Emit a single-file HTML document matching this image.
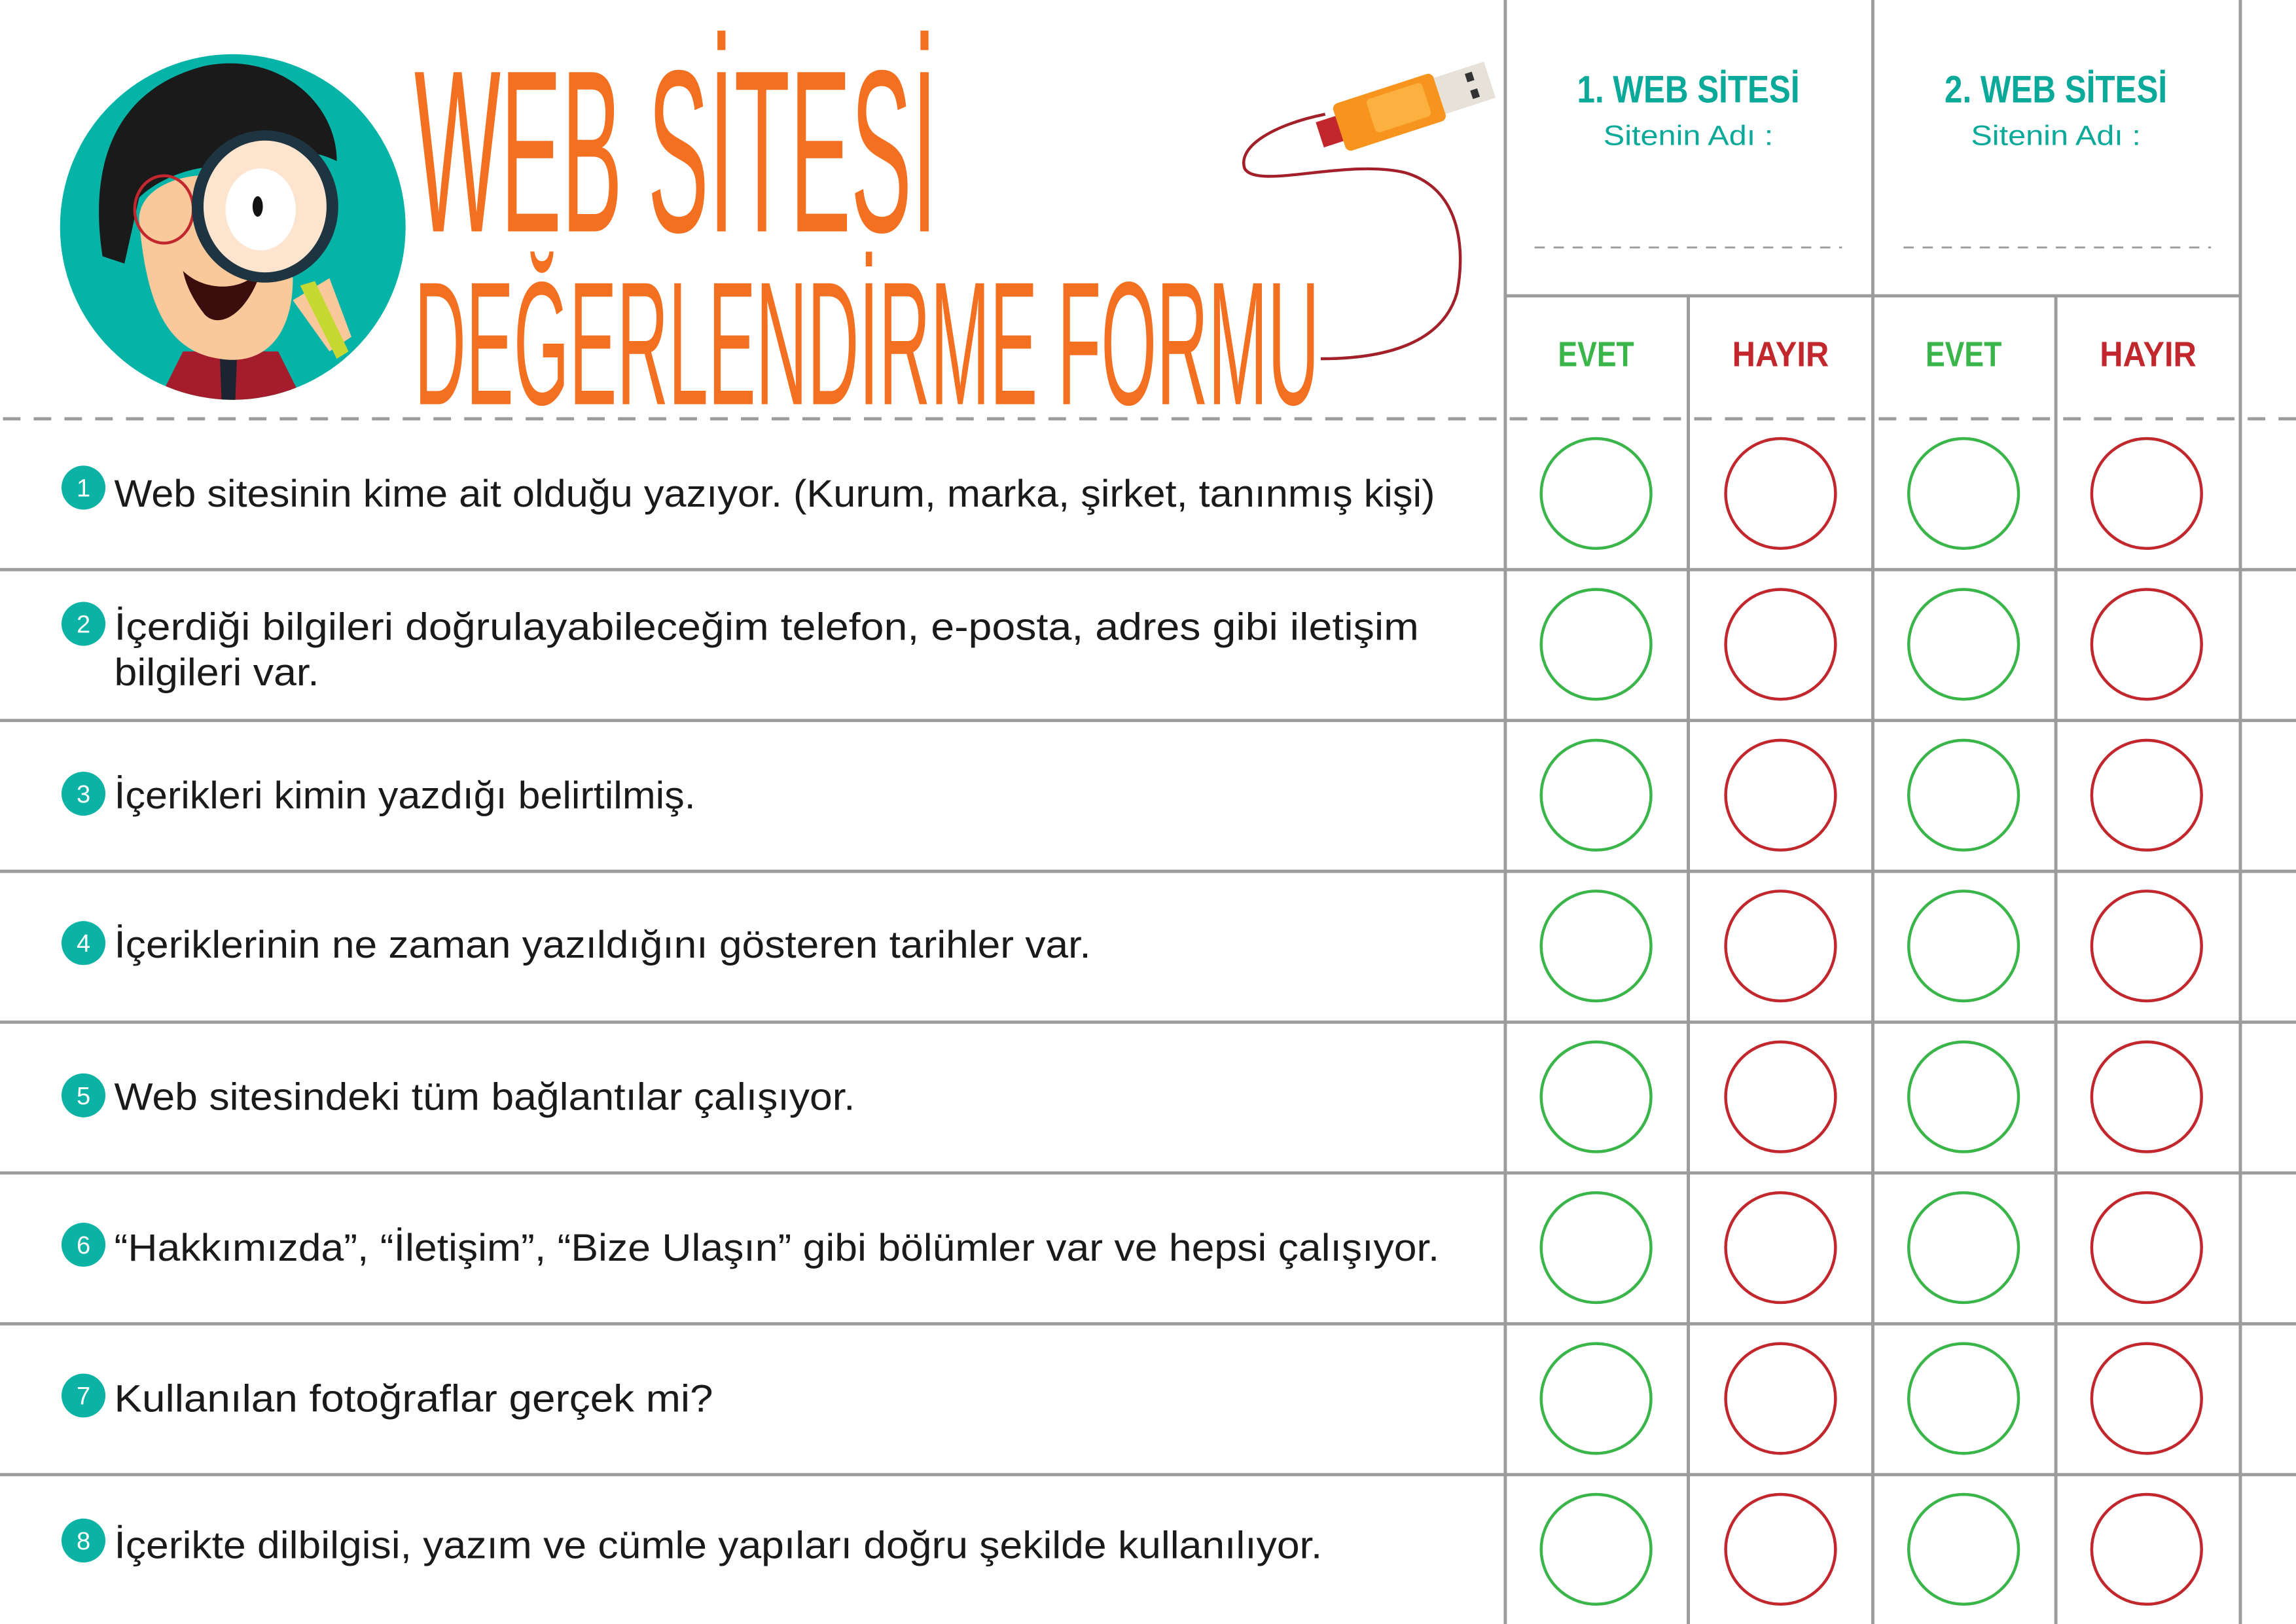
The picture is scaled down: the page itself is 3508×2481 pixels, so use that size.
<!DOCTYPE html>
<html><head><meta charset="utf-8"><style>
html,body{margin:0;padding:0;background:#fff;width:3508px;height:2481px;overflow:hidden}
svg{display:block}
.q{font-family:"Liberation Sans",sans-serif;font-size:26px;fill:#1a1a1a}
.n{font-family:"Liberation Sans",sans-serif;font-size:17px;fill:#fff;text-anchor:middle}
.t{font-family:"Liberation Sans",sans-serif;fill:#f37021}
.h{font-family:"Liberation Sans",sans-serif;font-weight:bold;fill:#0aa99a;font-size:26px}
.s{font-family:"Liberation Sans",sans-serif;fill:#0aa99a;font-size:19px}
.yn{font-family:"Liberation Sans",sans-serif;font-weight:bold;font-size:24px}
</style></head><body>
<svg width="3508" height="2481" viewBox="0 0 1568 1109" preserveAspectRatio="none" xmlns="http://www.w3.org/2000/svg">
<rect width="1568" height="1109" fill="#fff"/>
<g stroke="#9c9c9e" stroke-width="2.2" fill="none">
<line x1="1028" y1="0" x2="1028" y2="1109"/>
<line x1="1279" y1="0" x2="1279" y2="1109"/>
<line x1="1530" y1="0" x2="1530" y2="1109"/>
<line x1="1153" y1="202" x2="1153" y2="1109"/>
<line x1="1404" y1="202" x2="1404" y2="1109"/>
<line x1="1028" y1="202" x2="1530" y2="202"/>
<line x1="0" y1="389" x2="1568" y2="389"/>
<line x1="0" y1="492" x2="1568" y2="492"/>
<line x1="0" y1="595" x2="1568" y2="595"/>
<line x1="0" y1="698" x2="1568" y2="698"/>
<line x1="0" y1="801" x2="1568" y2="801"/>
<line x1="0" y1="904" x2="1568" y2="904"/>
<line x1="0" y1="1007" x2="1568" y2="1007"/>
<line x1="2" y1="286" x2="1568" y2="286" stroke-dasharray="12 9"/>
<line x1="1048" y1="169" x2="1258" y2="169" stroke-dasharray="7 6" stroke-width="1.3"/>
<line x1="1300" y1="169" x2="1510" y2="169" stroke-dasharray="7 6" stroke-width="1.3"/>
</g>
<text class="h" x="1153" y="70" text-anchor="middle" textLength="152" lengthAdjust="spacingAndGlyphs">1. WEB SİTESİ</text>
<text class="s" x="1153" y="99" text-anchor="middle" textLength="116" lengthAdjust="spacingAndGlyphs">Sitenin Adı :</text>
<text class="h" x="1404" y="70" text-anchor="middle" textLength="152" lengthAdjust="spacingAndGlyphs">2. WEB SİTESİ</text>
<text class="s" x="1404" y="99" text-anchor="middle" textLength="116" lengthAdjust="spacingAndGlyphs">Sitenin Adı :</text>
<g class="yn" text-anchor="middle">
<text x="1090" y="250" fill="#39b54a" textLength="52" lengthAdjust="spacingAndGlyphs">EVET</text>
<text x="1216" y="250" fill="#c1272d" textLength="66" lengthAdjust="spacingAndGlyphs">HAYIR</text>
<text x="1341" y="250" fill="#39b54a" textLength="52" lengthAdjust="spacingAndGlyphs">EVET</text>
<text x="1467" y="250" fill="#c1272d" textLength="66" lengthAdjust="spacingAndGlyphs">HAYIR</text>
</g>
<g fill="none" stroke-width="2">
<g id="r"><circle cx="1090" cy="337" r="37.5" stroke="#39b54a"/><circle cx="1216" cy="337" r="37.5" stroke="#c1272d"/><circle cx="1341" cy="337" r="37.5" stroke="#39b54a"/><circle cx="1466" cy="337" r="37.5" stroke="#c1272d"/></g>
<use href="#r" y="103"/><use href="#r" y="206"/><use href="#r" y="309"/><use href="#r" y="412"/><use href="#r" y="515"/><use href="#r" y="618"/><use href="#r" y="721"/>
</g>
<g fill="#0cb3a4">
<circle cx="57" cy="333" r="15"/><circle cx="57" cy="426" r="15"/><circle cx="57" cy="542" r="15"/><circle cx="57" cy="644" r="15"/>
<circle cx="57" cy="748" r="15"/><circle cx="57" cy="850" r="15"/><circle cx="57" cy="953" r="15"/><circle cx="57" cy="1052" r="15"/>
</g>
<g class="n">
<text x="57" y="339">1</text><text x="57" y="432">2</text><text x="57" y="548">3</text><text x="57" y="650">4</text>
<text x="57" y="754">5</text><text x="57" y="856">6</text><text x="57" y="959">7</text><text x="57" y="1058">8</text>
</g>
<g class="q">
<text x="78" y="346" textLength="902" lengthAdjust="spacingAndGlyphs">Web sitesinin kime ait olduğu yazıyor. (Kurum, marka, şirket, tanınmış kişi)</text>
<text x="78" y="437" textLength="891" lengthAdjust="spacingAndGlyphs">İçerdiği bilgileri doğrulayabileceğim telefon, e-posta, adres gibi iletişim</text>
<text x="78" y="468" textLength="140" lengthAdjust="spacingAndGlyphs">bilgileri var.</text>
<text x="78" y="552" textLength="397" lengthAdjust="spacingAndGlyphs">İçerikleri kimin yazdığı belirtilmiş.</text>
<text x="78" y="654" textLength="667" lengthAdjust="spacingAndGlyphs">İçeriklerinin ne zaman yazıldığını gösteren tarihler var.</text>
<text x="78" y="758" textLength="506" lengthAdjust="spacingAndGlyphs">Web sitesindeki tüm bağlantılar çalışıyor.</text>
<text x="78" y="861" textLength="905" lengthAdjust="spacingAndGlyphs">“Hakkımızda”, “İletişim”, “Bize Ulaşın” gibi bölümler var ve hepsi çalışıyor.</text>
<text x="78" y="964" textLength="409" lengthAdjust="spacingAndGlyphs">Kullanılan fotoğraflar gerçek mi?</text>
<text x="78" y="1064" textLength="825" lengthAdjust="spacingAndGlyphs">İçerikte dilbilgisi, yazım ve cümle yapıları doğru şekilde kullanılıyor.</text>
</g>
<text class="t" x="283" y="158" font-size="158" textLength="357" lengthAdjust="spacingAndGlyphs">WEB SİTESİ</text>
<text class="t" x="283" y="276" font-size="120" textLength="618" lengthAdjust="spacingAndGlyphs">DEĞERLENDİRME FORMU</text>
<path d="M905 78 C870 85 845 100 850 115 C858 130 920 108 960 118 C1000 130 1000 175 995 200 C985 235 945 245 902 245" fill="none" stroke="#a31f2a" stroke-width="2"/>
<g transform="rotate(-18 960 72)">
<rect x="898" y="64" width="16" height="18" fill="#c1272d"/>
<rect x="912" y="56" width="72" height="34" rx="4" fill="#f7941d"/>
<rect x="935" y="60" width="40" height="24" rx="3" fill="#fbb040"/>
<rect x="984" y="60" width="36" height="26" fill="#e6e2d9"/>
<rect x="1005" y="64" width="5" height="6" fill="#333"/><rect x="1005" y="76" width="5" height="6" fill="#333"/>
</g>
<defs><clipPath id="cc"><ellipse cx="159" cy="155" rx="118" ry="118"/></clipPath></defs>
<ellipse cx="159" cy="155" rx="118" ry="118" fill="#05b4a7"/>
<g clip-path="url(#cc)">
<path d="M100 290 L125 240 L190 240 L215 290 Z" fill="#a51d2d"/>
<path d="M150 240 L162 240 L160 290 L152 290 Z" fill="#1b2430"/>
<path d="M95 150 C95 120 150 110 180 130 L200 190 C200 230 180 250 150 245 C115 240 100 210 95 150 Z" fill="#f9c89b"/>
<path d="M70 175 C60 110 80 60 140 45 C190 35 230 70 230 110 C210 100 180 100 160 115 C140 110 110 120 95 135 L85 180 Z" fill="#1a1a1a"/>
<ellipse cx="112" cy="143" rx="20" ry="23" fill="none" stroke="#c1272d" stroke-width="2"/>
<path d="M125 185 C140 200 170 200 180 180 C170 215 150 225 140 215 C132 205 127 195 125 185 Z" fill="#3b0d0d"/>
<path d="M200 205 L225 190 L240 230 L225 240 Z" fill="#f9c89b"/>
<path d="M205 195 L215 192 L238 240 L230 245 Z" fill="#c6d932"/>
</g>
<ellipse cx="181" cy="141" rx="50" ry="52" fill="#1f3441"/>
<ellipse cx="181" cy="141" rx="42" ry="45" fill="#fde4cf"/>
<ellipse cx="178" cy="143" rx="24" ry="28" fill="#fff"/>
<ellipse cx="176" cy="141" rx="3.5" ry="7" fill="#111"/>
</svg>
</body></html>
